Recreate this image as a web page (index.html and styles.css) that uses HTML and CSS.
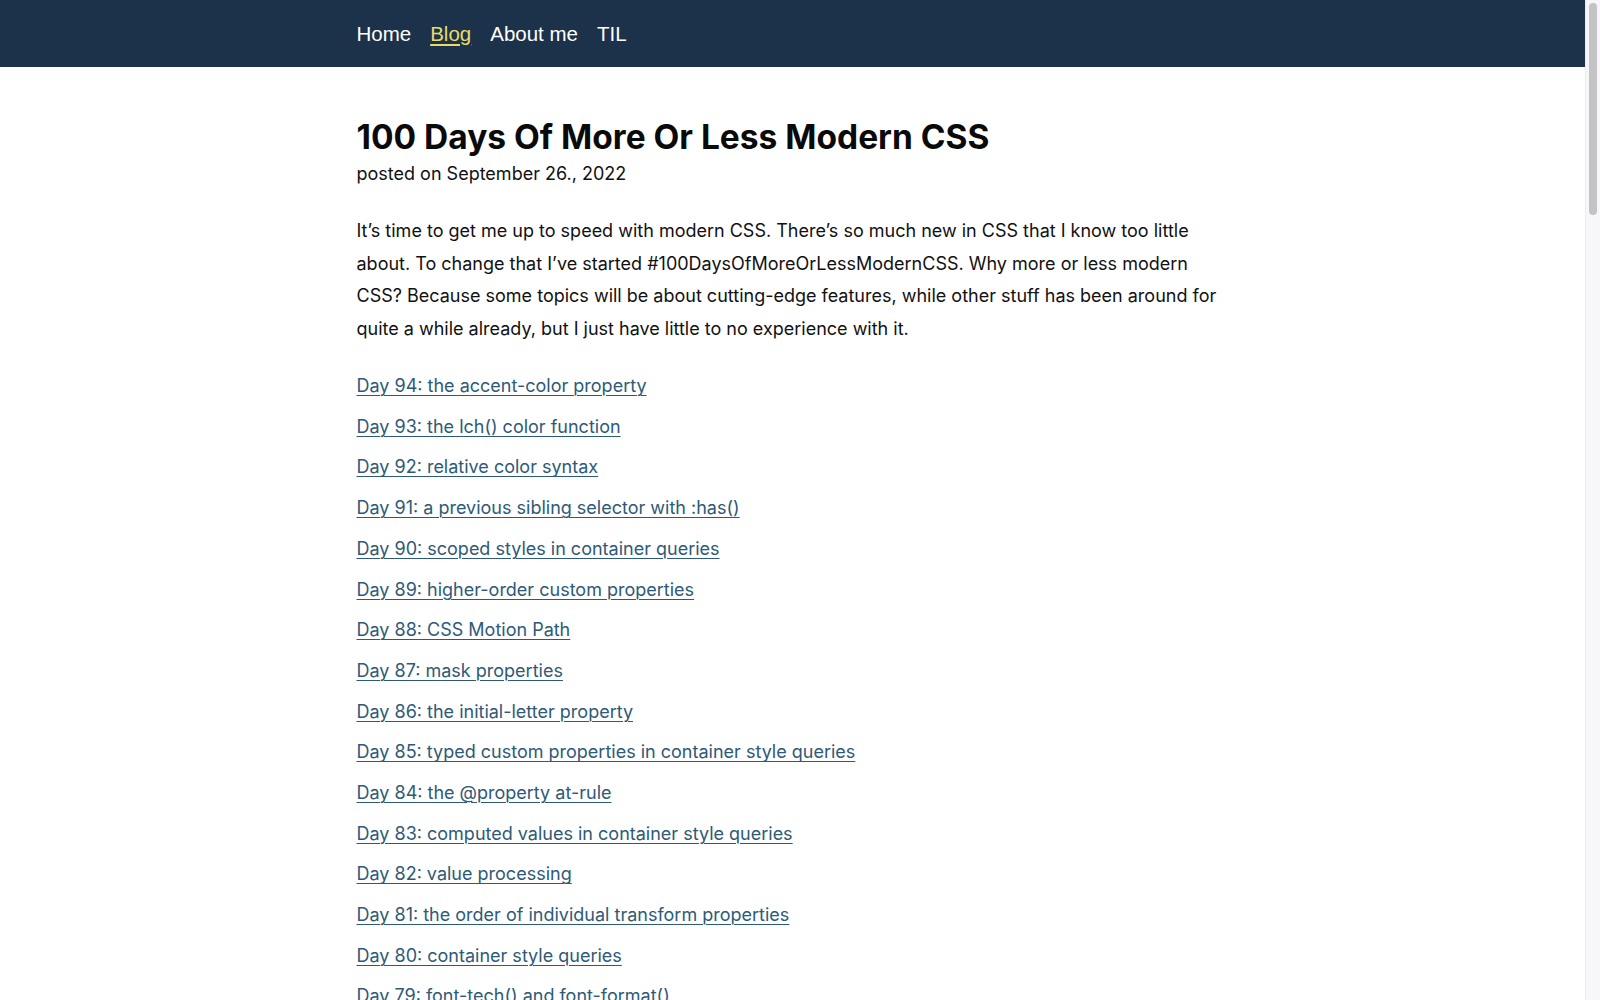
FILE: index.html
```html
<!DOCTYPE html>
<html lang="en">
<head>
<meta charset="utf-8">
<title>100 Days Of More Or Less Modern CSS</title>
<link rel="stylesheet" href="styles.css">
</head>
<body>
<header class="site-header">
  <nav class="nav">
    <a class="nav-link" href="#">Home</a>
    <a class="nav-link is-current" href="#">Blog</a>
    <a class="nav-link" href="#">About me</a>
    <a class="nav-link" href="#">TIL</a>
  </nav>
</header>
<main class="content">
  <h1 class="title">100 Days Of More Or Less Modern CSS</h1>
  <p class="meta">posted on September 26., 2022</p>
  <p class="intro">It’s time to get me up to speed with modern CSS. There’s so much new in CSS that I know too little about. To change that I’ve started #100DaysOfMoreOrLessModernCSS. Why more or less modern CSS? Because some topics will be about cutting-edge features, while other stuff has been around for quite a while already, but I just have little to no experience with it.</p>
  <ul class="days">
    <li><a href="#">Day 94: the accent-color property</a></li>
    <li><a href="#">Day 93: the lch() color function</a></li>
    <li><a href="#">Day 92: relative color syntax</a></li>
    <li><a href="#">Day 91: a previous sibling selector with :has()</a></li>
    <li><a href="#">Day 90: scoped styles in container queries</a></li>
    <li><a href="#">Day 89: higher-order custom properties</a></li>
    <li><a href="#">Day 88: CSS Motion Path</a></li>
    <li><a href="#">Day 87: mask properties</a></li>
    <li><a href="#">Day 86: the initial-letter property</a></li>
    <li><a href="#">Day 85: typed custom properties in container style queries</a></li>
    <li><a href="#">Day 84: the @property at-rule</a></li>
    <li><a href="#">Day 83: computed values in container style queries</a></li>
    <li><a href="#">Day 82: value processing</a></li>
    <li><a href="#">Day 81: the order of individual transform properties</a></li>
    <li><a href="#">Day 80: container style queries</a></li>
    <li><a href="#">Day 79: font-tech() and font-format()</a></li>
    <li><a href="#">Day 78: the display property</a></li>
    <li><a href="#">Day 77: the @layer at-rule</a></li>
    <li><a href="#">Day 76: the :focus-visible pseudo-class</a></li>
  </ul>
</main>
<div class="scrollbar" aria-hidden="true"><div class="scrollbar-thumb"></div></div>
</body>
</html>
```
FILE: styles.css
```css
html {
  background: #ffffff;
}

body {
  margin: 0 15px 0 0;
  font-family: Inter, "Noto Sans", sans-serif;
  color: #111111;
  background: #ffffff;
}

.scrollbar {
  position: fixed;
  top: 0;
  right: 0;
  width: 15px;
  height: 100vh;
  background: #f7f6f8;
  border-left: 1px solid #ebeaed;
  box-sizing: border-box;
  padding: 3px 3px 0 3px;
}

.scrollbar-thumb {
  height: 212px;
  border-radius: 5px;
  background: #c3c2c5;
}

.site-header {
  background: #1c314a;
  height: 67px;
  display: flex;
  align-items: center;
}

.nav {
  width: 872px;
  margin: 0 auto;
  display: flex;
  gap: 19px;
}

.nav-link {
  font-family: "Liberation Sans", Arial, sans-serif;
  font-size: 20.5px;
  color: #ffffff;
  text-decoration: none;
}

.nav-link.is-current {
  color: #e8db6c;
  text-decoration: underline;
  text-underline-offset: 3px;
}

.content {
  width: 872px;
  margin: 0 auto;
  padding-top: 50px;
}

.title {
  font-size: 33.5px;
  font-weight: 700;
  line-height: 1.2;
  margin: 0;
  color: #0a0a0a;
}

.meta {
  font-size: 18px;
  margin: 3px 0 0;
  line-height: 1.5;
}

.intro {
  font-size: 18px;
  line-height: 32.6px;
  margin: 28px 0 0;
}

.days {
  list-style: none;
  margin: 24.5px 0 0;
  padding: 0;
  display: flex;
  flex-direction: column;
  gap: 8.1px;
}

.days li {
  font-size: 18px;
  line-height: 32.6px;
}

.days a {
  color: #2e5a78;
  text-decoration: underline;
  text-underline-offset: 3px;
  text-decoration-thickness: 1px;
}
```
